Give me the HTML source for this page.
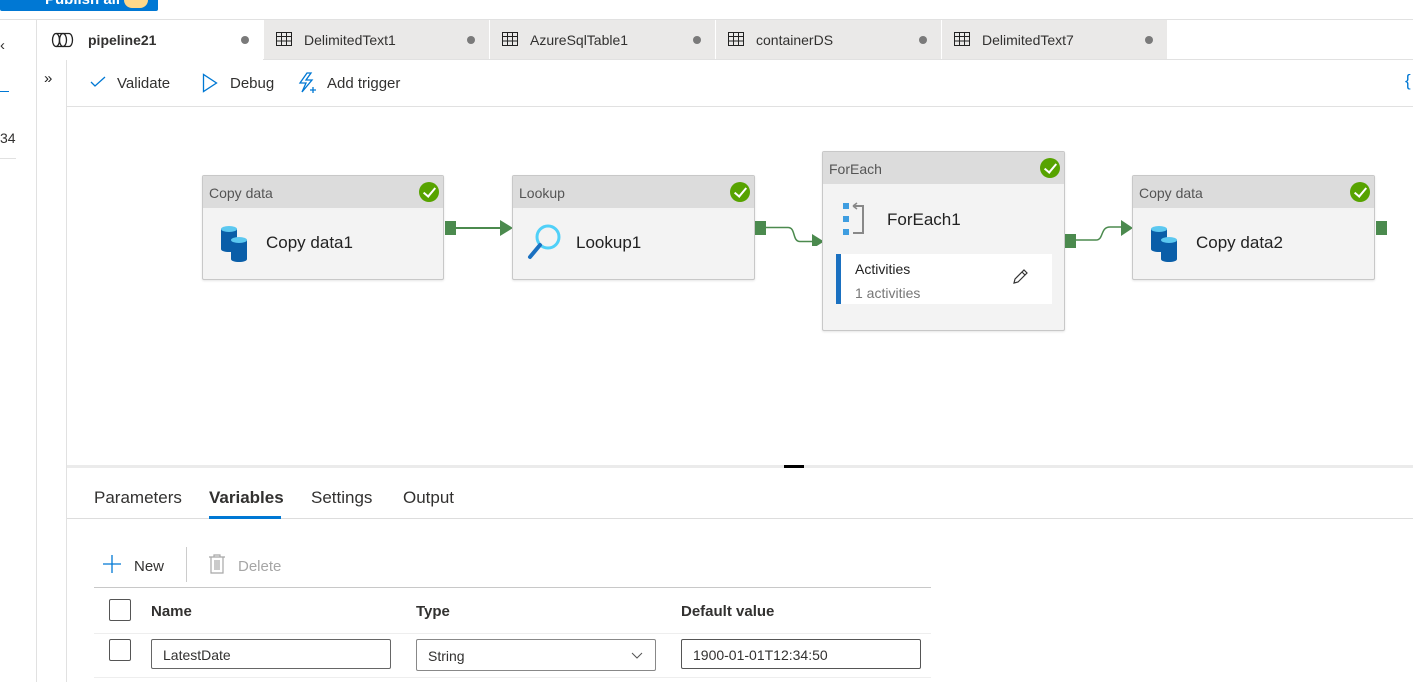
<!DOCTYPE html>
<html><head><style>
*{margin:0;padding:0;box-sizing:border-box}
body{width:1413px;height:682px;overflow:hidden;background:#fff;font-family:"Segoe UI","Liberation Sans",sans-serif;color:#323130;position:relative;font-size:14px}
.a{position:absolute}
.tab{position:absolute;top:20px;height:40px;background:#eae9e8;width:225px;font-size:14px}
.tab span{position:absolute;left:40px;top:12px}
.tab .dot{position:absolute;right:14px;top:16px;width:8px;height:8px;border-radius:50%;background:#7a7a7a}
.node{position:absolute;background:#f3f3f3;border:1px solid #c8c8c8;border-radius:2px;box-shadow:0 1px 2px rgba(0,0,0,.1)}
.node .hd{height:32px;background:#dcdcdc;font-size:14px;color:#555;padding:9px 6px 0}
.chk{position:absolute;right:4px;top:6px;width:20px;height:20px;border-radius:50%;background:#57a300}
.chk:after{content:"";position:absolute;left:7px;top:3px;width:5px;height:10px;border:solid #fff;border-width:0 2px 2px 0;transform:rotate(40deg)}
.port{position:absolute;width:11px;height:14px;background:#4b8a4e}
.cb{position:absolute;width:22px;height:22px;border:1px solid #555;border-radius:2px;background:#fff}
.inp{position:absolute;height:30px;border:1px solid #666;border-radius:2px;font-size:14px;padding:7px 11px 0}
</style></head><body>
<div class="a" style="left:0;top:0;width:158px;height:11px;background:#0078d4;border-radius:0 0 2px 2px;overflow:hidden"><span class="a" style="left:45px;top:-9px;color:#fff;font-size:15px;font-weight:600">Publish all</span></div>
<div class="a" style="left:124px;top:0;width:24px;height:8px;background:#ffd88a;border-radius:0 0 12px 12px"></div>
<div class="a" style="left:0;top:19px;width:1413px;height:1px;background:#e1e1e1"></div>
<div class="a" style="left:36px;top:20px;width:1px;height:662px;background:#e1e1e1"></div>
<div class="a" style="left:0;top:37px;font-size:15px">‹</div>
<div class="a" style="left:0;top:91px;width:9px;height:1px;background:#0078d4"></div>
<div class="a" style="left:0;top:130px;font-size:14px">34</div>
<div class="a" style="left:0;top:158px;width:16px;height:1px;background:#e1e1e1"></div>
<!-- tabs -->
<div class="a" style="left:37px;top:20px;width:226px;height:40px;background:#fff">
<svg class="a" style="left:14px;top:12px" width="24" height="16" viewBox="0 0 24 16" fill="none" stroke="#222" stroke-width="1.3"><ellipse cx="5" cy="8" rx="3.5" ry="6.5"/><ellipse cx="12" cy="8" rx="3.5" ry="6.5"/><path d="M5 1.5h13c2 0 3.5 3 3.5 6.5s-1.5 6.5-3.5 6.5H5"/></svg>
<span class="a" style="left:51px;top:12px;font-weight:600">pipeline21</span>
<div class="a" style="right:14px;top:16px;width:8px;height:8px;border-radius:50%;background:#7a7a7a"></div></div>
<div class="tab" style="left:264px"><svg class="a" style="left:12px;top:12px" width="16" height="14" viewBox="0 0 16 14" fill="none" stroke="#222"><rect x=".5" y=".5" width="15" height="13"/><path d="M.5 4.5h15M.5 9h15M5.5 .5v13M10.5 .5v13"/></svg><span>DelimitedText1</span><i class="dot"></i></div>
<div class="tab" style="left:490px"><svg class="a" style="left:12px;top:12px" width="16" height="14" viewBox="0 0 16 14" fill="none" stroke="#222"><rect x=".5" y=".5" width="15" height="13"/><path d="M.5 4.5h15M.5 9h15M5.5 .5v13M10.5 .5v13"/></svg><span>AzureSqlTable1</span><i class="dot"></i></div>
<div class="tab" style="left:716px"><svg class="a" style="left:12px;top:12px" width="16" height="14" viewBox="0 0 16 14" fill="none" stroke="#222"><rect x=".5" y=".5" width="15" height="13"/><path d="M.5 4.5h15M.5 9h15M5.5 .5v13M10.5 .5v13"/></svg><span>containerDS</span><i class="dot"></i></div>
<div class="tab" style="left:942px"><svg class="a" style="left:12px;top:12px" width="16" height="14" viewBox="0 0 16 14" fill="none" stroke="#222"><rect x=".5" y=".5" width="15" height="13"/><path d="M.5 4.5h15M.5 9h15M5.5 .5v13M10.5 .5v13"/></svg><span>DelimitedText7</span><i class="dot"></i></div>
<div class="a" style="left:263px;top:59px;width:1150px;height:1px;background:#e1e1e1"></div>
<!-- toolbar column -->
<div class="a" style="left:66px;top:60px;width:1px;height:622px;background:#e1e1e1"></div>
<div class="a" style="left:44px;top:70px;font-size:15px;color:#222">»</div>
<div class="a" style="left:67px;top:106px;width:1346px;height:1px;background:#e1e1e1"></div>
<svg class="a" style="left:90px;top:76px" width="16" height="12" viewBox="0 0 16 12" fill="none" stroke="#0078d4" stroke-width="1.3"><path d="M1 6l4 4 10-9"/></svg>
<div class="a" style="left:117px;top:75px;font-size:15px">Validate</div>
<svg class="a" style="left:202px;top:73px" width="16" height="20" viewBox="0 0 16 20" fill="none" stroke="#0078d4" stroke-width="1.3"><path d="M1.5 1.5v17l13-8.5z"/></svg>
<div class="a" style="left:230px;top:75px;font-size:15px">Debug</div>
<svg class="a" style="left:298px;top:72px" width="20" height="22" viewBox="0 0 20 22" fill="none" stroke="#0078d4" stroke-width="1.3"><path d="M9 1L2 11h6l-4 9 10-12H8l5-7z"/><path d="M15 15v6M12 18h6"/></svg>
<div class="a" style="left:327px;top:75px;font-size:15px">Add trigger</div>
<div class="a" style="left:1405px;top:71px;font-size:17px;color:#0078d4">{</div>
<!-- nodes -->
<div class="node" style="left:202px;top:175px;width:242px;height:105px"><div class="hd">Copy data<i class="chk"></i></div>
<svg class="a" style="left:16px;top:48px" width="34" height="38" viewBox="0 0 34 38"><path d="M2 5v20c0 2 4 3 8 3s8-1 8-3V5z" fill="#0a5ea8"/><ellipse cx="10" cy="5" rx="8" ry="3" fill="#5cc8f0"/><path d="M12 16v19c0 2 4 3 8 3s8-1 8-3V16z" fill="#0a5ea8"/><ellipse cx="20" cy="16" rx="8" ry="3" fill="#5cc8f0"/></svg>
<div class="a" style="left:63px;top:57px;font-size:17px;color:#222">Copy data1</div></div>
<div class="port" style="left:445px;top:221px"></div>
<div class="a" style="left:456px;top:227px;width:46px;height:1.5px;background:#4b8a4e"></div>
<svg class="a" style="left:500px;top:220px" width="13" height="16"><path d="M0 0l13 8-13 8z" fill="#4b8a4e"/></svg>
<div class="node" style="left:512px;top:175px;width:243px;height:105px"><div class="hd">Lookup<i class="chk"></i></div>
<svg class="a" style="left:14px;top:46px" width="36" height="40" viewBox="0 0 36 40" fill="none"><circle cx="21" cy="15" r="11" stroke="#50d0f8" stroke-width="3"/><path d="M13 23L3 35" stroke="#1a70c0" stroke-width="4" stroke-linecap="round"/></svg>
<div class="a" style="left:63px;top:57px;font-size:17px;color:#222">Lookup1</div></div>
<div class="port" style="left:755px;top:221px"></div>
<svg class="a" style="left:766px;top:226px" width="60" height="20" fill="none"><path d="M0 1.5h22c8 0 4 14 12 14h12" stroke="#4b8a4e" stroke-width="1.5"/><path d="M46 8l12 7.5-12 7.5z" fill="#4b8a4e"/></svg>
<div class="node" style="left:822px;top:151px;width:243px;height:180px"><div class="hd">ForEach<i class="chk"></i></div>
<svg class="a" style="left:18px;top:49px" width="26" height="36" viewBox="0 0 26 36"><rect x="2" y="2" width="6" height="6" fill="#3e9de0"/><rect x="2" y="15" width="6" height="6" fill="#3e9de0"/><rect x="2" y="28" width="6" height="6" fill="#3e9de0"/><path d="M12 5h10v27H12" fill="none" stroke="#888" stroke-width="2"/><path d="M12 5l4-3M12 5l4 3" stroke="#888" stroke-width="1.5"/></svg>
<div class="a" style="left:64px;top:58px;font-size:17px;color:#222">ForEach1</div>
<div class="a" style="left:13px;top:102px;width:216px;height:50px;background:#fff;border-left:5px solid #1a70c0">
<div class="a" style="left:14px;top:7px;font-size:14px;color:#222">Activities</div>
<div class="a" style="left:14px;top:31px;font-size:14px;color:#777">1 activities</div>
<svg class="a" style="left:170px;top:14px" width="18" height="18" viewBox="0 0 18 18" fill="none" stroke="#333" stroke-width="1.2"><path d="M3 15l1-4 9-9 3 3-9 9zM11 4l3 3"/></svg></div></div>
<div class="port" style="left:1065px;top:234px"></div>
<svg class="a" style="left:1076px;top:220px" width="60" height="24" fill="none"><path d="M0 20h20c8 0 4-13 14-13h12" stroke="#4b8a4e" stroke-width="1.5"/><path d="M45 0l12 8-12 8z" fill="#4b8a4e"/></svg>
<div class="node" style="left:1132px;top:175px;width:243px;height:105px"><div class="hd">Copy data<i class="chk"></i></div>
<svg class="a" style="left:16px;top:48px" width="34" height="38" viewBox="0 0 34 38"><path d="M2 5v20c0 2 4 3 8 3s8-1 8-3V5z" fill="#0a5ea8"/><ellipse cx="10" cy="5" rx="8" ry="3" fill="#5cc8f0"/><path d="M12 16v19c0 2 4 3 8 3s8-1 8-3V16z" fill="#0a5ea8"/><ellipse cx="20" cy="16" rx="8" ry="3" fill="#5cc8f0"/></svg>
<div class="a" style="left:63px;top:57px;font-size:17px;color:#222">Copy data2</div></div>
<div class="port" style="left:1376px;top:221px"></div>
<!-- split -->
<div class="a" style="left:67px;top:465px;width:1346px;height:3px;background:#ebebeb"></div>
<div class="a" style="left:784px;top:465px;width:20px;height:3px;background:#000"></div>
<!-- bottom tabs -->
<div class="a" style="left:94px;top:488px;font-size:17px">Parameters</div>
<div class="a" style="left:209px;top:488px;font-size:17px;font-weight:600">Variables</div>
<div class="a" style="left:311px;top:488px;font-size:17px">Settings</div>
<div class="a" style="left:403px;top:488px;font-size:17px">Output</div>
<div class="a" style="left:67px;top:518px;width:1346px;height:1px;background:#ddd"></div>
<div class="a" style="left:209px;top:516px;width:72px;height:3px;background:#0078d4"></div>
<svg class="a" style="left:103px;top:555px" width="18" height="18" fill="none" stroke="#0078d4" stroke-width="1.3"><path d="M9 0v18M0 9h18"/></svg>
<div class="a" style="left:134px;top:558px;font-size:15px">New</div>
<div class="a" style="left:186px;top:547px;width:1px;height:35px;background:#ccc"></div>
<svg class="a" style="left:208px;top:554px" width="18" height="20" fill="none" stroke="#a8a8a8" stroke-width="1.2"><path d="M1 3h16M6 3V1h6v2M3 3v16h12V3M7 6v10M9 6v10M11 6v10"/></svg>
<div class="a" style="left:238px;top:558px;font-size:15px;color:#a6a6a6">Delete</div>
<div class="a" style="left:94px;top:587px;width:837px;height:1px;background:#c8c8c8"></div>
<div class="cb" style="left:109px;top:599px"></div>
<div class="a" style="left:151px;top:603px;font-size:15px;font-weight:600">Name</div>
<div class="a" style="left:416px;top:603px;font-size:15px;font-weight:600">Type</div>
<div class="a" style="left:681px;top:603px;font-size:15px;font-weight:600">Default value</div>
<div class="a" style="left:94px;top:633px;width:837px;height:1px;background:#eee"></div>
<div class="cb" style="left:109px;top:639px"></div>
<div class="inp" style="left:151px;top:639px;width:240px;height:30px">LatestDate</div>
<div class="inp" style="left:416px;top:639px;width:240px;height:32px;border-color:#888;padding-top:8px">String<svg class="a" style="right:12px;top:12px" width="12" height="8" fill="none" stroke="#555"><path d="M1 1l5 5 5-5"/></svg></div>
<div class="inp" style="left:681px;top:639px;width:240px;height:30px;border-color:#555">1900-01-01T12:34:50</div>
<div class="a" style="left:94px;top:677px;width:837px;height:1px;background:#eee"></div>
</body></html>
